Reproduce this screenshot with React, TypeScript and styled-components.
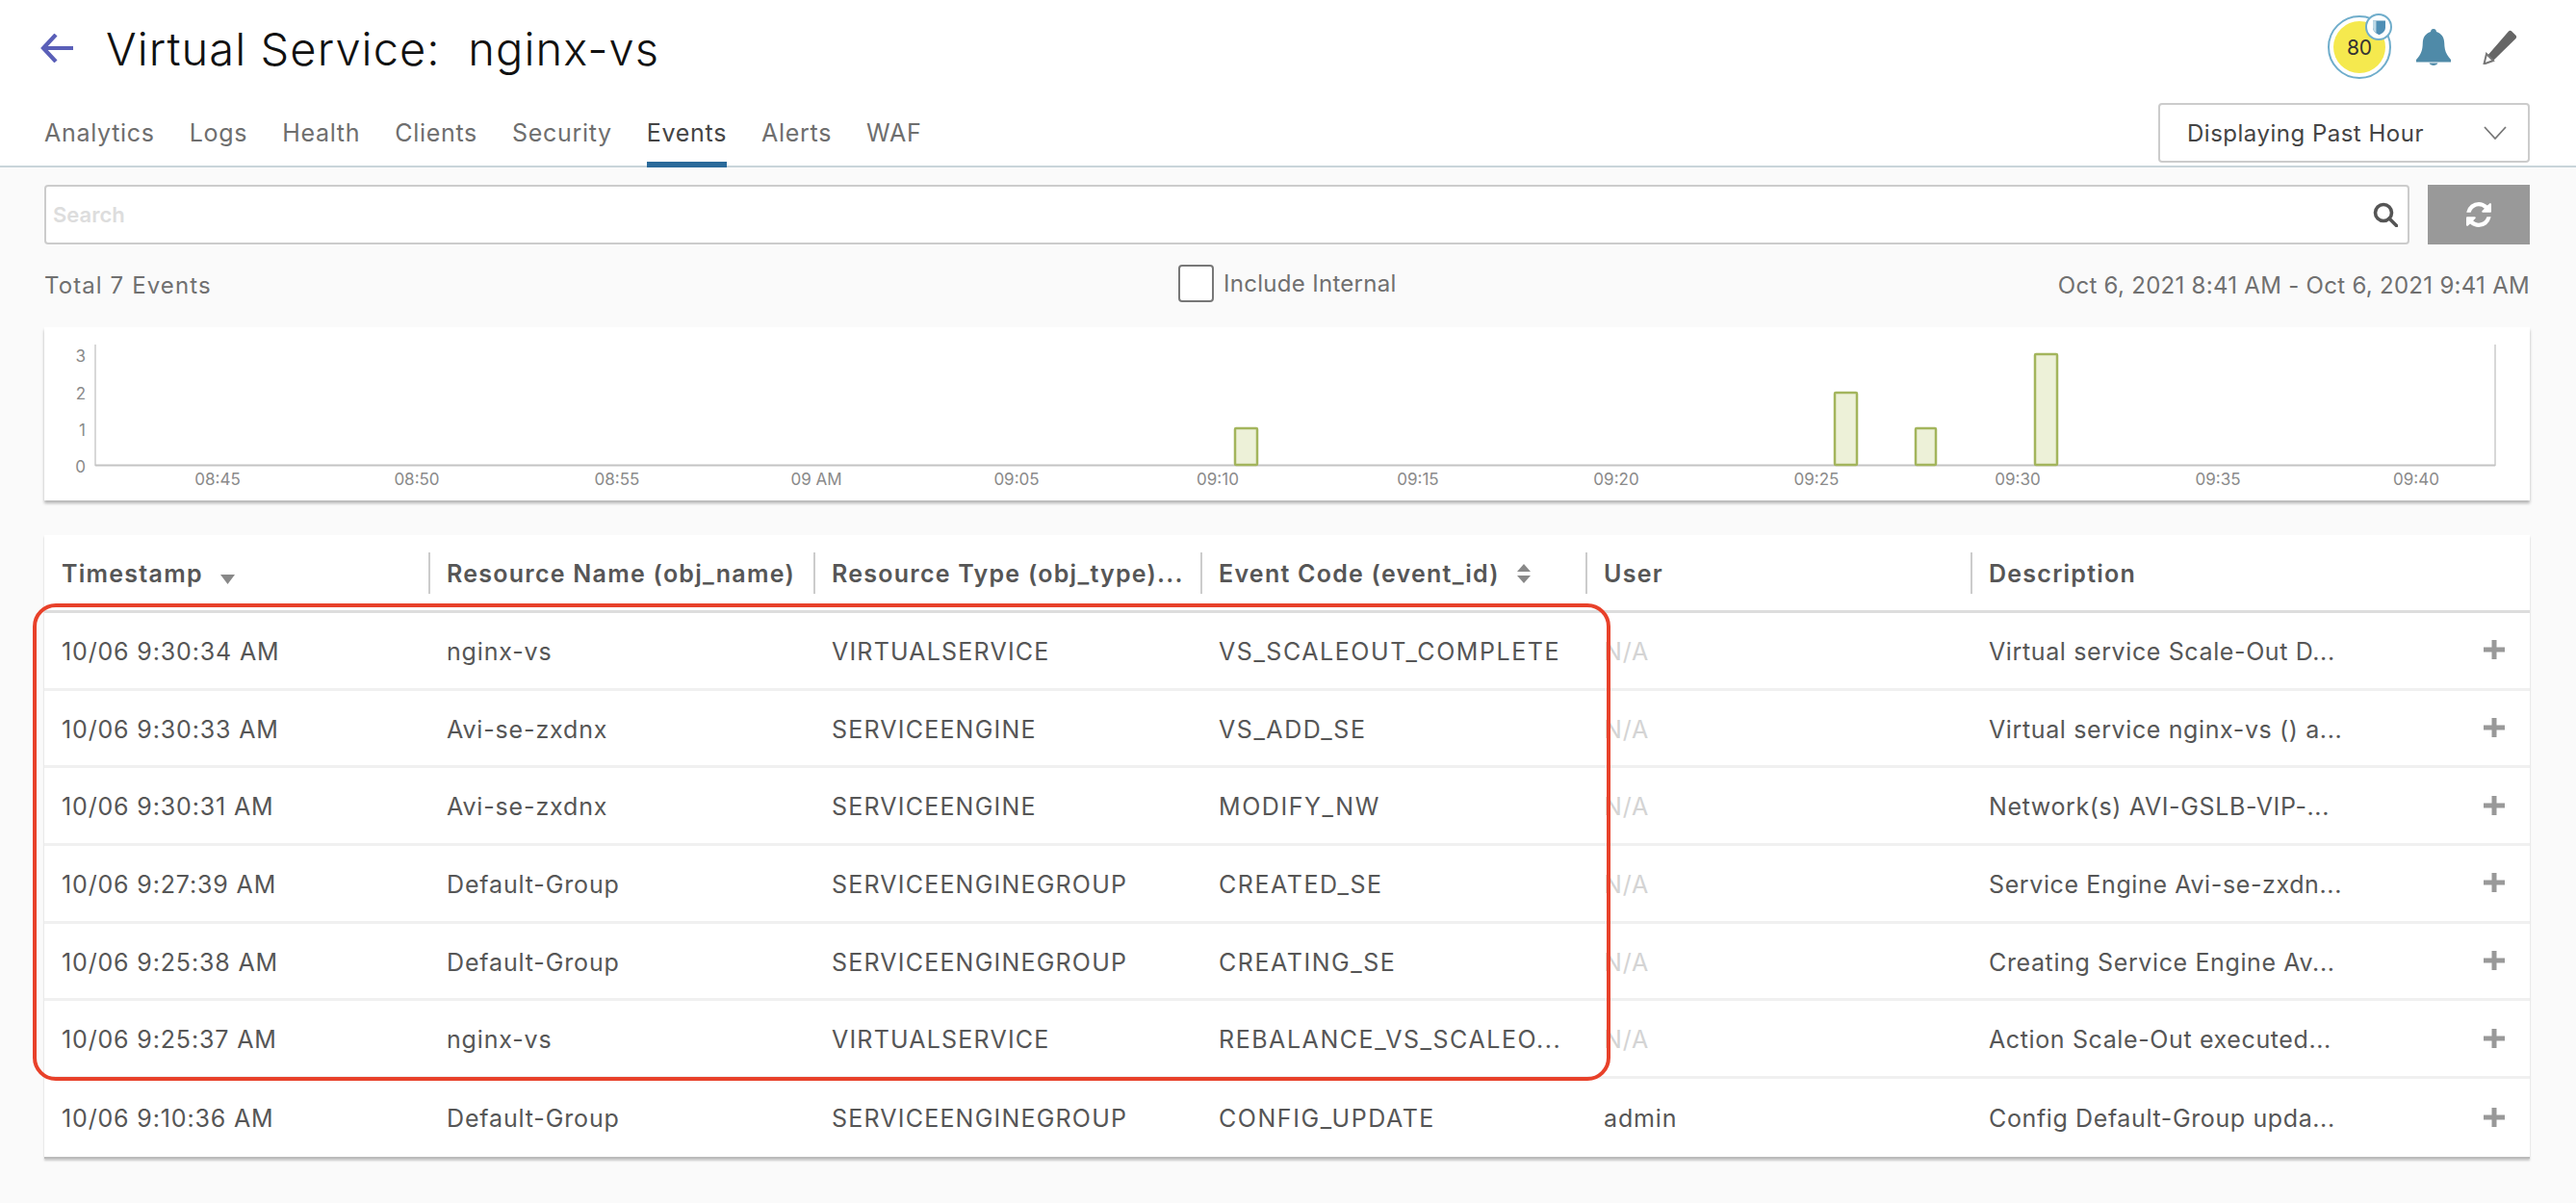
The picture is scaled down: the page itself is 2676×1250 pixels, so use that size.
import React from 'react';
import styled, { createGlobalStyle } from 'styled-components';

const FONT = `Inter, 'Noto Sans', 'Liberation Sans', sans-serif`;

const TABS = ['Analytics', 'Logs', 'Health', 'Clients', 'Security', 'Events', 'Alerts', 'WAF'];

const ROWS = [
  ['10/06 9:30:34 AM', 'nginx-vs', 'VIRTUALSERVICE', 'VS_SCALEOUT_COMPLETE', 'N/A', 'Virtual service Scale-Out D...'],
  ['10/06 9:30:33 AM', 'Avi-se-zxdnx', 'SERVICEENGINE', 'VS_ADD_SE', 'N/A', 'Virtual service nginx-vs () a...'],
  ['10/06 9:30:31 AM', 'Avi-se-zxdnx', 'SERVICEENGINE', 'MODIFY_NW', 'N/A', 'Network(s) AVI-GSLB-VIP-...'],
  ['10/06 9:27:39 AM', 'Default-Group', 'SERVICEENGINEGROUP', 'CREATED_SE', 'N/A', 'Service Engine Avi-se-zxdn...'],
  ['10/06 9:25:38 AM', 'Default-Group', 'SERVICEENGINEGROUP', 'CREATING_SE', 'N/A', 'Creating Service Engine Av...'],
  ['10/06 9:25:37 AM', 'nginx-vs', 'VIRTUALSERVICE', 'REBALANCE_VS_SCALEO...', 'N/A', 'Action Scale-Out executed...'],
  ['10/06 9:10:36 AM', 'Default-Group', 'SERVICEENGINEGROUP', 'CONFIG_UPDATE', 'admin', 'Config Default-Group upda...'],
];

const X_TICKS = [
  ['08:45', 180], ['08:50', 387], ['08:55', 595], ['09 AM', 802], ['09:05', 1010], ['09:10', 1219],
  ['09:15', 1427], ['09:20', 1633], ['09:25', 1841], ['09:30', 2050], ['09:35', 2258], ['09:40', 2464],
] as const;

const BARS = [
  { x: 1237, w: 23, top: 105 },
  { x: 1860, w: 23, top: 68 },
  { x: 1944, w: 21, top: 105 },
  { x: 2068, w: 23, top: 28 },
];

const GlobalStyle = createGlobalStyle`
  html, body { margin: 0; padding: 0; background: #fafafa; }
  body { font-family: ${FONT}; color: #565656; }
`;

const Page = styled.div`
  width: 2676px;
  height: 1250px;
  overflow: hidden;
  position: relative;
  background: #fafafa;
`;
const Header = styled.header`
  background: #fff;
`;
const TitleRow = styled.div`
  height: 100px;
  padding: 0 61px 0 42px;
  display: flex;
  align-items: center;
`;
const Title = styled.h1`
  margin: 0 0 0 34px;
  font-size: 47px;
  font-weight: 300;
  letter-spacing: 1.08px;
  color: #111;
  white-space: pre;
  flex: 1;
`;
const Actions = styled.div`
  margin-bottom: 2px;
  display: flex;
  align-items: center;
`;
const BellSlot = styled.div`
  margin: 0 33px 0 26px;
  display: flex;
`;
const Score = styled.div`
  position: relative;
  width: 66px;
  height: 66px;
  box-sizing: border-box;
  border: 2px solid #6fadcb;
  border-radius: 50%;
  display: flex;
  align-items: center;
  justify-content: center;
`;
const ScoreValue = styled.div`
  width: 54px;
  height: 54px;
  border-radius: 50%;
  background: #f5e94e;
  font-size: 21px;
  color: #333;
  display: flex;
  align-items: center;
  justify-content: center;
`;
const ScoreBadge = styled.div`
  position: absolute;
  top: -4px;
  right: -3px;
  width: 28px;
  height: 28px;
  box-sizing: border-box;
  border: 2px solid #6fadcb;
  border-radius: 50%;
  background: #fff;
  display: flex;
  align-items: center;
  justify-content: center;
`;
const TabRow = styled.div`
  height: 72px;
  padding: 0 48px 0 46px;
  border-bottom: 2px solid #c9d5da;
  display: flex;
  justify-content: space-between;
  align-items: flex-end;
`;
const TabList = styled.nav`
  display: flex;
  gap: 36px;
`;
const Tab = styled.a<{ $active?: boolean }>`
  height: 68px;
  margin-bottom: -2px;
  box-sizing: border-box;
  font-size: 25px;
  line-height: 28px;
  letter-spacing: 0.7px;
  padding-top: 18px;
  color: ${(p) => (p.$active ? '#444' : '#6e6e6e')};
  border-bottom: 6px solid ${(p) => (p.$active ? '#2a6a9a' : 'transparent')};
`;
const RangeSelect = styled.div`
  width: 386px;
  height: 62px;
  margin-bottom: 3px;
  box-sizing: border-box;
  padding: 0 22px 0 28px;
  background: #fff;
  border: 2px solid #ccc;
  border-radius: 4px;
  font-size: 24px;
  letter-spacing: 0.5px;
  color: #444;
  display: flex;
  align-items: center;
  justify-content: space-between;
`;
const Content = styled.main`
  padding: 18px 48px 0 46px;
`;
const SearchRow = styled.div`
  display: flex;
  gap: 19px;
`;
const SearchBox = styled.div`
  flex: 1;
  height: 62px;
  box-sizing: border-box;
  padding: 0 10px 0 7px;
  background: #fff;
  border: 2px solid #ccc;
  border-radius: 4px;
  display: flex;
  align-items: center;
  justify-content: space-between;
`;
const Placeholder = styled.span`
  font-size: 22px;
  font-weight: 600;
  color: #ddd;
`;
const RefreshButton = styled.button`
  width: 106px;
  height: 62px;
  border: 0;
  padding: 0;
  background: #999;
  display: flex;
  align-items: center;
  justify-content: center;
`;
const InfoRow = styled.div`
  height: 40px;
  margin-top: 20px;
  display: grid;
  grid-template-columns: 1178px 1fr auto;
  align-items: center;
  font-size: 24px;
  letter-spacing: 0.3px;
  color: #707070;
`;
const InfoText = styled.span<{ $wide?: boolean }>`
  padding-top: 4px;
  letter-spacing: ${(p) => (p.$wide ? '1.1px' : '0.29px')};
`;
const IncludeInternal = styled.label`
  display: flex;
  align-items: center;
  gap: 10px;
`;
const Checkbox = styled.span`
  width: 37px;
  height: 39px;
  box-sizing: border-box;
  background: #fff;
  border: 2px solid #777;
  border-radius: 4px;
`;
const ChartCard = styled.section`
  height: 180px;
  margin-top: 26px;
  background: #fff;
  box-shadow: 0 3px 3px rgba(0, 0, 0, 0.28);
`;
const TableCard = styled.section`
  margin-top: 36px;
  background: #fff;
  border-bottom: 2px solid #bbb;
  box-shadow: 0 2px 2px rgba(0, 0, 0, 0.2);
`;
const GRID = '399px 400px 402px 400px 400px 1fr';
const HeadRow = styled.div`
  height: 81px;
  box-sizing: border-box;
  padding-top: 18px;
  border-bottom: 3px solid #ddd;
  display: grid;
  grid-template-columns: ${GRID};
`;
const HeadCell = styled.div<{ $first?: boolean }>`
  height: 43px;
  box-sizing: border-box;
  padding-left: ${(p) => (p.$first ? '18px' : '17px')};
  border-left: ${(p) => (p.$first ? '0' : '2px solid #ccc')};
  font-size: 25px;
  font-weight: 600;
  letter-spacing: 1.25px;
  color: #565656;
  white-space: nowrap;
  display: flex;
  align-items: center;
  gap: 18px;
`;
const Row = styled.div<{ $last?: boolean }>`
  height: 80.7px;
  box-sizing: border-box;
  border-bottom: ${(p) => (p.$last ? '0' : '3px solid #f0f0f0')};
  display: grid;
  grid-template-columns: ${GRID};
  align-items: center;
`;
const Cell = styled.div<{ $muted?: boolean; $spacing?: number }>`
  padding: 2px 0 0 19px;
  font-size: 25px;
  letter-spacing: ${(p) => p.$spacing ?? 0.85}px;
  white-space: nowrap;
  color: ${(p) => (p.$muted ? '#d4d4d4' : '#565656')};
  &:first-child {
    padding-left: 18px;
  }
`;
const DescCell = styled(Cell)`
  padding-right: 26px;
  display: flex;
  justify-content: space-between;
  align-items: center;
`;
const PlusSvg = styled.svg`
  margin-top: -3px;
`;
const SortDownSvg = styled.svg`
  margin-top: 12px;
`;
const Highlight = styled.div`
  position: absolute;
  left: 34px;
  top: 627px;
  width: 1639px;
  height: 496px;
  box-sizing: border-box;
  border: 4px solid #e8412a;
  border-radius: 24px;
  pointer-events: none;
`;

const BackArrow = () => (
  <svg width="34" height="30" viewBox="0 0 34 30" fill="none" stroke="#5a5fb8" strokeWidth="4.200">
    <path d="M34 15H3M16 1 3 15l13 14" />
  </svg>
);
const Bell = () => (
  <svg width="36" height="38" viewBox="0 0 36 38" fill="#4f8aa8">
    <path d="M18 0c1.800 0 2.800 1.200 3 3 5.400 1.600 8 6 8.200 11.500.2 7.500 1.600 12 6.800 17.500v2.500H0V32c5.200-5.500 6.600-10 6.800-17.500C7 9 9.600 4.600 15 3c.2-1.800 1.200-3 3-3Z" />
    <path d="M13.500 35.500h9c-.6 1.600-2.400 2.500-4.500 2.500s-3.900-.9-4.500-2.500Z" />
  </svg>
);
const Pencil = () => (
  <svg width="36" height="36" viewBox="0 0 36 36">
    <path d="M27 1.500c1-.9 2.300-.9 3.200 0l4.300 4.300c.9.900.9 2.300 0 3.200L11 32 4 28 27 1.500Z" fill="#666" />
    <path d="M4 25l7 7-9.500 3.500L4 25Z" fill="#fff" stroke="#777" strokeWidth="2" />
  </svg>
);
const Shield = () => (
  <svg width="13" height="17" viewBox="0 0 15 18">
    <path d="M0 1h15v8c0 4-3 7-7.500 9C3 16 0 13 0 9V1Z" fill="#4f8fb5" />
    <path d="M4 1H0v8c0 2.500 1.500 5 4 6.500V1Z" fill="#bcd8e6" />
  </svg>
);
const Chevron = () => (
  <svg width="24" height="14" viewBox="0 0 24 14" fill="none" stroke="#777" strokeWidth="1.800">
    <path d="M1 1l11 12L23 1" />
  </svg>
);
const SearchIcon = () => (
  <svg width="26" height="26" viewBox="0 0 26 26" fill="none" stroke="#555" strokeWidth="3.600">
    <circle cx="11" cy="11" r="8.500" />
    <path d="M17 17l7.500 7.500" strokeLinecap="round" />
  </svg>
);
const RefreshIcon = () => (
  <svg width="26" height="26" viewBox="0 0 1536 1536" fill="#fff">
    <path d="M1511 928q0 5-1 7-64 268-268 434.500T764 1536q-146 0-282.500-55T238 1324l-129 129q-19 19-45 19t-45-19-19-45V960q0-26 19-45t45-19h448q26 0 45 19t19 45-19 45l-137 137q71 66 161 102t187 36q134 0 250-65t186-179q11-17 53-117 8-23 30-23h192q13 0 22.500 9.500t9.500 22.500zm25-800v448q0 26-19 45t-45 19h-448q-26 0-45-19t-19-45 19-45l138-138q-148-137-349-137-134 0-250 65T332 500q-11 17-53 117-8 23-30 23H50q-13 0-22.500-9.500T18 608v-7q65-268 270-434.500T768 0q146 0 284 55.500T1297 212l130-129q19-19 45-19t45 19 19 45z" />
  </svg>
);
const SortDown = () => (
  <SortDownSvg width="15" height="10" viewBox="0 0 15 10" fill="#888">
    <path d="M0 0h15L7.500 10Z" />
  </SortDownSvg>
);
const SortBoth = () => (
  <svg width="14" height="20" viewBox="0 0 14 20" fill="#888">
    <path d="M7 0l7 8H0ZM0 12h14l-7 8Z" />
  </svg>
);
const PlusIcon = () => (
  <PlusSvg width="22" height="20" viewBox="0 0 22 20" fill="#999">
    <path d="M8.500 0h5v7.500H22v5h-8.500V20h-5v-7.500H0v-5h8.500Z" />
  </PlusSvg>
);

const EventsChart = () => (
  <svg width="2582" height="180" viewBox="0 0 2582 180">
    <g fontFamily={FONT} fontSize="17" fill="#8a8a8a">
      {[['3', 36], ['2', 75], ['1', 113], ['0', 151]].map(([label, y]) => (
        <text key={label} x="43" y={y} textAnchor="end">{label}</text>
      ))}
      {X_TICKS.map(([label, x]) => (
        <text key={label} x={x} y="164" textAnchor="middle">{label}</text>
      ))}
    </g>
    <path d="M53 18v126M2546 18v126" stroke="#ccc" strokeWidth="1.500" fill="none" />
    <path d="M53 143.500h2493" stroke="#c4c4c4" strokeWidth="2" fill="none" />
    {BARS.map((bar) => (
      <rect
        key={bar.x}
        x={bar.x}
        y={bar.top}
        width={bar.w}
        height={143 - bar.top}
        rx="1"
        fill="#edf1d8"
        stroke="#a3b55c"
        strokeWidth="2.500"
      />
    ))}
  </svg>
);

export default function App() {
  return (
    <Page>
      <GlobalStyle />
      <Header>
        <TitleRow>
          <BackArrow />
          <Title>{'Virtual Service:  nginx-vs'}</Title>
          <Actions>
            <Score>
              <ScoreValue>80</ScoreValue>
              <ScoreBadge>
                <Shield />
              </ScoreBadge>
            </Score>
            <BellSlot>
              <Bell />
            </BellSlot>
            <Pencil />
          </Actions>
        </TitleRow>
        <TabRow>
          <TabList>
            {TABS.map((tab) => (
              <Tab key={tab} $active={tab === 'Events'}>{tab}</Tab>
            ))}
          </TabList>
          <RangeSelect>
            Displaying Past Hour
            <Chevron />
          </RangeSelect>
        </TabRow>
      </Header>
      <Content>
        <SearchRow>
          <SearchBox>
            <Placeholder>Search</Placeholder>
            <SearchIcon />
          </SearchBox>
          <RefreshButton>
            <RefreshIcon />
          </RefreshButton>
        </SearchRow>
        <InfoRow>
          <InfoText $wide>Total 7 Events</InfoText>
          <IncludeInternal>
            <Checkbox />
            Include Internal
          </IncludeInternal>
          <InfoText>Oct 6, 2021 8:41 AM - Oct 6, 2021 9:41 AM</InfoText>
        </InfoRow>
        <ChartCard>
          <EventsChart />
        </ChartCard>
        <TableCard>
          <HeadRow>
            <HeadCell $first>Timestamp <SortDown /></HeadCell>
            <HeadCell>Resource Name (obj_name)</HeadCell>
            <HeadCell>Resource Type (obj_type)...</HeadCell>
            <HeadCell>Event Code (event_id) <SortBoth /></HeadCell>
            <HeadCell>User</HeadCell>
            <HeadCell>Description</HeadCell>
          </HeadRow>
          {ROWS.map((row, i) => (
            <Row key={row[0]} $last={i === ROWS.length - 1}>
              <Cell>{row[0]}</Cell>
              <Cell>{row[1]}</Cell>
              <Cell $spacing={1.2}>{row[2]}</Cell>
              <Cell $spacing={1.55}>{row[3]}</Cell>
              <Cell $muted={row[4] === 'N/A'}>{row[4]}</Cell>
              <DescCell $spacing={0.62}>
                {row[5]}
                <PlusIcon />
              </DescCell>
            </Row>
          ))}
        </TableCard>
      </Content>
      <Highlight />
    </Page>
  );
}
